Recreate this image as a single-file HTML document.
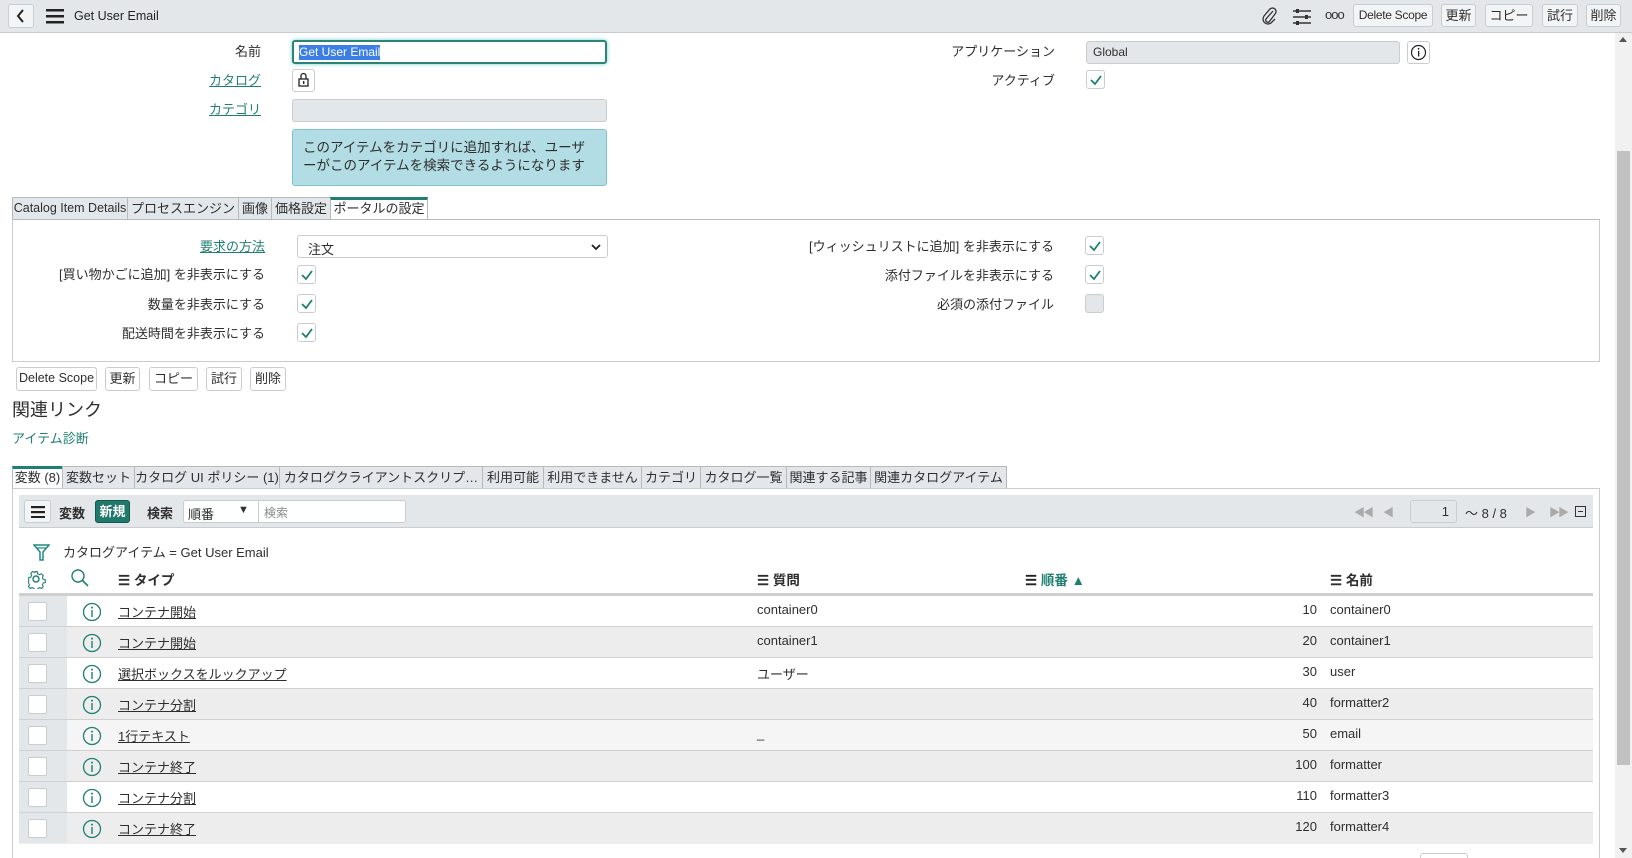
<!DOCTYPE html>
<html style="width:1632px;height:858px;overflow:hidden"><head><meta charset="utf-8">
<style>
*{box-sizing:border-box;margin:0;padding:0}
body{width:1632px;height:858px;overflow:hidden;background:#fff;font-family:"Liberation Sans","Noto Sans CJK JP",sans-serif;font-size:13px;color:#2e2e2e;position:relative}
.a{position:absolute}
.hdr{left:0;top:0;width:1632px;height:33px;background:#e4e7ea;border-bottom:1px solid #c9cdd1}
.btn{position:absolute;height:23px;border:1px solid #c9cdd1;border-radius:3px;background:#f3f4f5;font-size:13px;line-height:21px;text-align:center;color:#2e2e2e;white-space:nowrap;overflow:hidden}
.lbl{position:absolute;text-align:right;font-size:13px;line-height:18px}
.lnk{color:#1f7f72;text-decoration:underline}
.inp{position:absolute;border:1px solid #c9cdd1;border-radius:3px;background:#fff}
.cb{position:absolute;width:19px;height:19px;border:1px solid #c9cdd1;border-radius:3px;background:#fff}
.cb svg{position:absolute;left:2px;top:2px}
.tab{position:absolute;height:22px;border:1px solid #b6babe;border-bottom:none;background:#e4e7ea;font-size:13px;line-height:21px;text-align:center;white-space:nowrap;overflow:hidden;color:#2e2e2e}
.tab.on{background:#fff;border-top:3px solid #1f7f72;line-height:18px}
.row{position:absolute;left:19px;width:1574px;height:31px;border-bottom:1px solid #d0d0d0}
.row .cc{position:absolute;left:0;top:0;width:48px;height:30px;background:#e4e7ea}
.row .ck{position:absolute;left:9px;top:6px;width:19px;height:19px;background:#fff;border:1px solid #c9cdd1;border-radius:2px}
.row .ic{position:absolute;left:63px;top:6px}
.row .t{position:absolute;left:99px;top:6px;text-decoration:underline;font-size:13px}
.row .q{position:absolute;left:738px;top:6px}
.row .n{position:absolute;right:276px;top:6px}
.row .nm{position:absolute;left:1311px;top:6px}
</style></head><body>
<div class="a hdr"></div>
<div class="btn" style="left:8px;top:4px;width:26px;height:24px;background:#f3f4f5"><svg width="12" height="16" viewBox="0 0 12 16" style="margin-top:3px"><path d="M8 2 L3 8 L8 14" fill="none" stroke="#222" stroke-width="2"/></svg></div>
<svg class="a" style="left:46px;top:8px" width="18" height="16"><rect y="1" width="18" height="2.5" fill="#222"/><rect y="7" width="18" height="2.5" fill="#222"/><rect y="13" width="18" height="2.5" fill="#222"/></svg>
<div class="a" style="left:74px;top:8px;font-size:12.5px;line-height:17px;color:#222">Get User Email</div>
<svg class="a" style="left:1260px;top:6px" width="18" height="20" viewBox="0 0 18 20"><path d="M13 5 L6 13 a2.2 2.2 0 0 0 3 3 L15 8 a3.5 3.5 0 0 0 -5 -5 L4 10 a5 5 0 0 0 7 7 L15 13" fill="none" stroke="#333" stroke-width="1.3"/></svg>
<svg class="a" style="left:1292px;top:7px" width="20" height="20"><path d="M1 4H19M1 10H19M1 16H19" stroke="#333" stroke-width="1.5"/><rect x="4" y="2" width="3" height="4" fill="#333"/><rect x="13" y="8" width="3" height="4" fill="#333"/><rect x="4" y="14" width="3" height="4" fill="#333"/></svg>
<div class="a" style="left:1325px;top:7px;font-size:13px;letter-spacing:-1px;color:#333">ooo</div>
<div class="btn" style="left:1353px;top:4px;width:80px;font-size:12px;letter-spacing:-0.3px">Delete Scope</div>
<div class="btn" style="left:1441px;top:4px;width:35px">更新</div>
<div class="btn" style="left:1485px;top:4px;width:48px">コピー</div>
<div class="btn" style="left:1542px;top:4px;width:36px">試行</div>
<div class="btn" style="left:1586px;top:4px;width:35px">削除</div>
<!-- scrollbar -->
<div class="a" style="left:1615px;top:33px;width:17px;height:825px;background:#f1f1f1"></div>
<div class="a" style="left:1617px;top:151px;width:13px;height:614px;background:#c1c1c1"></div>
<div class="a" style="left:1619px;top:37px;width:0;height:0;border-left:4px solid transparent;border-right:4px solid transparent;border-bottom:5px solid #555"></div>
<div class="a" style="left:1619px;top:848px;width:0;height:0;border-left:4px solid transparent;border-right:4px solid transparent;border-top:5px solid #555"></div>
<!-- top form -->
<div class="lbl" style="left:160px;width:101px;top:43px">名前</div>
<div class="inp" style="left:292px;top:40px;width:315px;height:24px;border:2px solid #2b8577;box-shadow:0 0 4px #7cc"><span style="position:absolute;left:5px;top:3px;background:#3a7ee6;color:#fff;font-size:12px;line-height:15px">Get User Email</span></div>
<div class="lbl" style="left:160px;width:101px;top:72px"><span class="lnk">カタログ</span></div>
<div class="inp" style="left:292px;top:69px;width:23px;height:23px"><svg width="21" height="21"><rect x="6" y="9" width="9" height="7" fill="none" stroke="#222" stroke-width="1.3"/><path d="M8 9V6a2.5 2.5 0 0 1 5 0V9" fill="none" stroke="#222" stroke-width="1.3"/><rect x="10" y="11" width="1.4" height="3" fill="#222"/></svg></div>
<div class="lbl" style="left:160px;width:101px;top:101px"><span class="lnk">カテゴリ</span></div>
<div class="inp" style="left:292px;top:99px;width:315px;height:23px;background:#e4e7ea"></div>
<div class="a" style="left:292px;top:129px;width:315px;height:57px;background:#b3dde4;border:1px solid #7fc3cf;border-radius:3px;padding:9px 10px;font-size:13.5px;line-height:18px;color:#2e2e2e">このアイテムをカテゴリに追加すれば、ユーザーがこのアイテムを検索できるようになります</div>
<div class="lbl" style="left:900px;width:155px;top:43px">アプリケーション</div>
<div class="inp" style="left:1086px;top:41px;width:314px;height:23px;background:#e4e7ea"><span style="position:absolute;left:6px;top:3px;font-size:12px">Global</span></div>
<div class="inp" style="left:1407px;top:41px;width:23px;height:23px"><svg width="21" height="21"><circle cx="10.5" cy="10.5" r="7" fill="none" stroke="#222" stroke-width="1.2"/><rect x="10" y="9" width="1.3" height="5.5" fill="#222"/><circle cx="10.6" cy="6.8" r="0.9" fill="#222"/></svg></div>
<div class="lbl" style="left:900px;width:155px;top:72px">アクティブ</div>
<div class="cb" style="left:1086px;top:70px"><svg width="14" height="14"><path d="M2 7 L6 11 L12 3" fill="none" stroke="#1f7f72" stroke-width="1.8"/></svg></div>
<!-- tabs -->
<div class="tab" style="left:12px;top:197px;width:116px;font-size:12.5px">Catalog Item Details</div>
<div class="tab" style="left:127px;top:197px;width:112px">プロセスエンジン</div>
<div class="tab" style="left:238px;top:197px;width:34px">画像</div>
<div class="tab" style="left:271px;top:197px;width:60px">価格設定</div>
<div class="tab on" style="left:330px;top:197px;width:98px">ポータルの設定</div>
<div class="a" style="left:12px;top:219px;width:1588px;height:143px;border:1px solid #c9cdd1;border-top-color:#b6babe"></div>
<div class="lbl" style="left:100px;width:165px;top:238px"><span class="lnk">要求の方法</span></div>
<div class="inp" style="left:297px;top:235px;width:311px;height:23px"><span style="position:absolute;left:10px;top:3px">注文</span><svg style="position:absolute;right:6px;top:7px" width="10" height="8"><path d="M1 2 L5 6 L9 2" fill="none" stroke="#222" stroke-width="1.8"/></svg></div>
<div class="lbl" style="left:40px;width:225px;top:266px">[買い物かごに追加] を非表示にする</div>
<div class="lbl" style="left:40px;width:225px;top:296px">数量を非表示にする</div>
<div class="lbl" style="left:40px;width:225px;top:325px">配送時間を非表示にする</div>
<div class="cb" style="left:297px;top:265px"><svg width="14" height="14"><path d="M2 7 L6 11 L12 3" fill="none" stroke="#1f7f72" stroke-width="1.8"/></svg></div>
<div class="cb" style="left:297px;top:294px"><svg width="14" height="14"><path d="M2 7 L6 11 L12 3" fill="none" stroke="#1f7f72" stroke-width="1.8"/></svg></div>
<div class="cb" style="left:297px;top:323px"><svg width="14" height="14"><path d="M2 7 L6 11 L12 3" fill="none" stroke="#1f7f72" stroke-width="1.8"/></svg></div>
<div class="lbl" style="left:760px;width:294px;top:238px">[ウィッシュリストに追加] を非表示にする</div>
<div class="lbl" style="left:760px;width:294px;top:267px">添付ファイルを非表示にする</div>
<div class="lbl" style="left:760px;width:294px;top:296px">必須の添付ファイル</div>
<div class="cb" style="left:1085px;top:236px"><svg width="14" height="14"><path d="M2 7 L6 11 L12 3" fill="none" stroke="#1f7f72" stroke-width="1.8"/></svg></div>
<div class="cb" style="left:1085px;top:265px"><svg width="14" height="14"><path d="M2 7 L6 11 L12 3" fill="none" stroke="#1f7f72" stroke-width="1.8"/></svg></div>
<div class="cb" style="left:1085px;top:294px;background:#e4e7ea"></div>
<!-- bottom buttons -->
<div class="btn" style="left:16px;top:367px;width:81px;height:24px;background:#fff;font-size:12.5px">Delete Scope</div>
<div class="btn" style="left:105px;top:367px;width:35px;height:24px;background:#fff">更新</div>
<div class="btn" style="left:149px;top:367px;width:49px;height:24px;background:#fff">コピー</div>
<div class="btn" style="left:206px;top:367px;width:36px;height:24px;background:#fff">試行</div>
<div class="btn" style="left:250px;top:367px;width:36px;height:24px;background:#fff">削除</div>
<div class="a" style="left:12px;top:398px;font-size:18px;line-height:24px">関連リンク</div>
<div class="a" style="left:12px;top:428px;font-size:13px;color:#1f7f72">アイテム診断</div>
<!-- related tabs -->
<div class="tab on" style="left:12px;top:466px;width:51px">変数 (8)</div>
<div class="tab" style="left:62px;top:466px;width:73px">変数セット</div>
<div class="tab" style="left:134px;top:466px;width:146px">カタログ UI ポリシー (1)</div>
<div class="tab" style="left:279px;top:466px;width:204px">カタログクライアントスクリプ…</div>
<div class="tab" style="left:482px;top:466px;width:62px">利用可能</div>
<div class="tab" style="left:543px;top:466px;width:99px">利用できません</div>
<div class="tab" style="left:641px;top:466px;width:60px">カテゴリ</div>
<div class="tab" style="left:700px;top:466px;width:87px">カタログ一覧</div>
<div class="tab" style="left:786px;top:466px;width:85px">関連する記事</div>
<div class="tab" style="left:870px;top:466px;width:137px">関連カタログアイテム</div>
<div class="a" style="left:12px;top:488px;width:1588px;height:370px;border:1px solid #c9cdd1;border-bottom:none"></div>
<!-- toolbar -->
<div class="a" style="left:19px;top:495px;width:1574px;height:33px;background:#e4e7ea;border-bottom:1px solid #c9cdd1"></div>
<div class="btn" style="left:24px;top:500px;width:27px;height:23px"><svg width="14" height="12" style="margin-top:5px"><rect width="14" height="2.2" fill="#222"/><rect y="5" width="14" height="2.2" fill="#222"/><rect y="10" width="14" height="2.2" fill="#222"/></svg></div>
<div class="a" style="left:59px;top:503px;font-weight:bold">変数</div>
<div class="a" style="left:95px;top:500px;width:35px;height:23px;background:#1f7a6b;border:1px solid #16574c;border-radius:3px;color:#fff;font-weight:bold;text-align:center;line-height:21px">新規</div>
<div class="a" style="left:147px;top:503px;font-weight:bold">検索</div>
<div class="inp" style="left:183px;top:500px;width:223px;height:23px"><span style="position:absolute;left:4px;top:3px">順番</span><span style="position:absolute;left:54px;top:3px;font-size:11px">▼</span><div style="position:absolute;left:74px;top:0;width:1px;height:21px;background:#c9cdd1"></div><span style="position:absolute;left:80px;top:3px;color:#888;font-size:12px">検索</span></div>
<div class="a" style="left:1354px;top:504px;color:#aaa;font-size:11px;letter-spacing:-2px">◀◀</div>
<div class="a" style="left:1383px;top:504px;color:#aaa;font-size:11px">◀</div>
<div class="inp" style="left:1410px;top:500px;width:47px;height:23px;background:#e4e7ea"><span style="position:absolute;right:7px;top:3px">1</span></div>
<div class="a" style="left:1465px;top:503px">～ 8 / 8</div>
<div class="a" style="left:1525px;top:504px;color:#aaa;font-size:11px">▶</div>
<div class="a" style="left:1549px;top:504px;color:#aaa;font-size:11px;letter-spacing:-2px">▶▶</div>
<div class="a" style="left:1575px;top:506px;width:11px;height:11px;border:1px solid #333"><div style="margin:4px 2px;height:1px;background:#333"></div></div>
<!-- filter -->
<svg class="a" style="left:33px;top:543px" width="17" height="19"><path d="M1 2 H16 L10 9 V17 H7 V9 Z" fill="none" stroke="#1f8a80" stroke-width="1.5"/><path d="M3 5 H14" stroke="#1f8a80" stroke-width="1.2"/></svg>
<div class="a" style="left:63px;top:542px">カタログアイテム = Get User Email</div>
<!-- header -->
<svg class="a" style="left:26px;top:569px" width="20" height="20" viewBox="0 0 20 20"><circle cx="10" cy="10" r="3" fill="none" stroke="#1f7f72" stroke-width="1.4"/><path d="M8.5 2h3l.5 2.3 2 1 2.2-1 2 2-1 2.2 1 2 2.3.5v3l-2.3.5-1 2 1 2.2-2 2-2.2-1-2 1-.5 2.3h-3l-.5-2.3-2-1-2.2 1-2-2 1-2.2-1-2L2 11.5v-3l2.3-.5 1-2-1-2.2 2-2 2.2 1 2-1z" fill="none" stroke="#1f7f72" stroke-width="1.2" transform="scale(.9) translate(1 1)"/></svg>
<svg class="a" style="left:70px;top:568px" width="20" height="20"><circle cx="8" cy="8" r="6" fill="none" stroke="#1f7f72" stroke-width="1.4"/><path d="M12.5 12.5 L18 18" stroke="#1f7f72" stroke-width="1.6"/></svg>
<div class="a" style="left:118px;top:569px;font-weight:bold;font-size:13.5px">☰ タイプ</div>
<div class="a" style="left:757px;top:569px;font-weight:bold;font-size:13.5px">☰ 質問</div>
<div class="a" style="left:1025px;top:569px;font-weight:bold;font-size:13.5px;color:#1f7f72"><span style="color:#222">☰</span> 順番 ▲</div>
<div class="a" style="left:1330px;top:569px;font-weight:bold;font-size:13.5px">☰ 名前</div>
<div class="a" style="left:19px;top:593px;width:1574px;height:3px;background:#cfcfcf"></div>
<!-- rows -->
<div class="row" style="top:596px;background:#fff"><div class="cc"></div><div class="ck"></div><svg class="ic" width="20" height="20"><circle cx="10" cy="10" r="8.5" fill="none" stroke="#1f7f72" stroke-width="1.3"/><rect x="9.3" y="8" width="1.4" height="7" fill="#1f7f72"/><circle cx="10" cy="5.6" r="1" fill="#1f7f72"/></svg><span class="t">コンテナ開始</span><span class="q">container0</span><span class="n">10</span><span class="nm">container0</span></div>
<div class="row" style="top:627px;background:#ededed"><div class="cc"></div><div class="ck"></div><svg class="ic" width="20" height="20"><circle cx="10" cy="10" r="8.5" fill="none" stroke="#1f7f72" stroke-width="1.3"/><rect x="9.3" y="8" width="1.4" height="7" fill="#1f7f72"/><circle cx="10" cy="5.6" r="1" fill="#1f7f72"/></svg><span class="t">コンテナ開始</span><span class="q">container1</span><span class="n">20</span><span class="nm">container1</span></div>
<div class="row" style="top:658px;background:#fff"><div class="cc"></div><div class="ck"></div><svg class="ic" width="20" height="20"><circle cx="10" cy="10" r="8.5" fill="none" stroke="#1f7f72" stroke-width="1.3"/><rect x="9.3" y="8" width="1.4" height="7" fill="#1f7f72"/><circle cx="10" cy="5.6" r="1" fill="#1f7f72"/></svg><span class="t">選択ボックスをルックアップ</span><span class="q">ユーザー</span><span class="n">30</span><span class="nm">user</span></div>
<div class="row" style="top:689px;background:#ededed"><div class="cc"></div><div class="ck"></div><svg class="ic" width="20" height="20"><circle cx="10" cy="10" r="8.5" fill="none" stroke="#1f7f72" stroke-width="1.3"/><rect x="9.3" y="8" width="1.4" height="7" fill="#1f7f72"/><circle cx="10" cy="5.6" r="1" fill="#1f7f72"/></svg><span class="t">コンテナ分割</span><span class="n">40</span><span class="nm">formatter2</span></div>
<div class="row" style="top:720px;background:#f5f5f5"><div class="cc"></div><div class="ck"></div><svg class="ic" width="20" height="20"><circle cx="10" cy="10" r="8.5" fill="none" stroke="#1f7f72" stroke-width="1.3"/><rect x="9.3" y="8" width="1.4" height="7" fill="#1f7f72"/><circle cx="10" cy="5.6" r="1" fill="#1f7f72"/></svg><span class="t">1行テキスト</span><span class="q">_</span><span class="n">50</span><span class="nm">email</span></div>
<div class="row" style="top:751px;background:#ededed"><div class="cc"></div><div class="ck"></div><svg class="ic" width="20" height="20"><circle cx="10" cy="10" r="8.5" fill="none" stroke="#1f7f72" stroke-width="1.3"/><rect x="9.3" y="8" width="1.4" height="7" fill="#1f7f72"/><circle cx="10" cy="5.6" r="1" fill="#1f7f72"/></svg><span class="t">コンテナ終了</span><span class="n">100</span><span class="nm">formatter</span></div>
<div class="row" style="top:782px;background:#fff"><div class="cc"></div><div class="ck"></div><svg class="ic" width="20" height="20"><circle cx="10" cy="10" r="8.5" fill="none" stroke="#1f7f72" stroke-width="1.3"/><rect x="9.3" y="8" width="1.4" height="7" fill="#1f7f72"/><circle cx="10" cy="5.6" r="1" fill="#1f7f72"/></svg><span class="t">コンテナ分割</span><span class="n">110</span><span class="nm">formatter3</span></div>
<div class="row" style="top:813px;background:#ededed;border-bottom:none"><div class="cc"></div><div class="ck"></div><svg class="ic" width="20" height="20"><circle cx="10" cy="10" r="8.5" fill="none" stroke="#1f7f72" stroke-width="1.3"/><rect x="9.3" y="8" width="1.4" height="7" fill="#1f7f72"/><circle cx="10" cy="5.6" r="1" fill="#1f7f72"/></svg><span class="t">コンテナ終了</span><span class="n">120</span><span class="nm">formatter4</span></div>
<div class="a" style="left:1420px;top:853px;width:48px;height:5px;border:1px solid #c9cdd1;border-bottom:none;border-radius:3px 3px 0 0"></div>
</body></html>
